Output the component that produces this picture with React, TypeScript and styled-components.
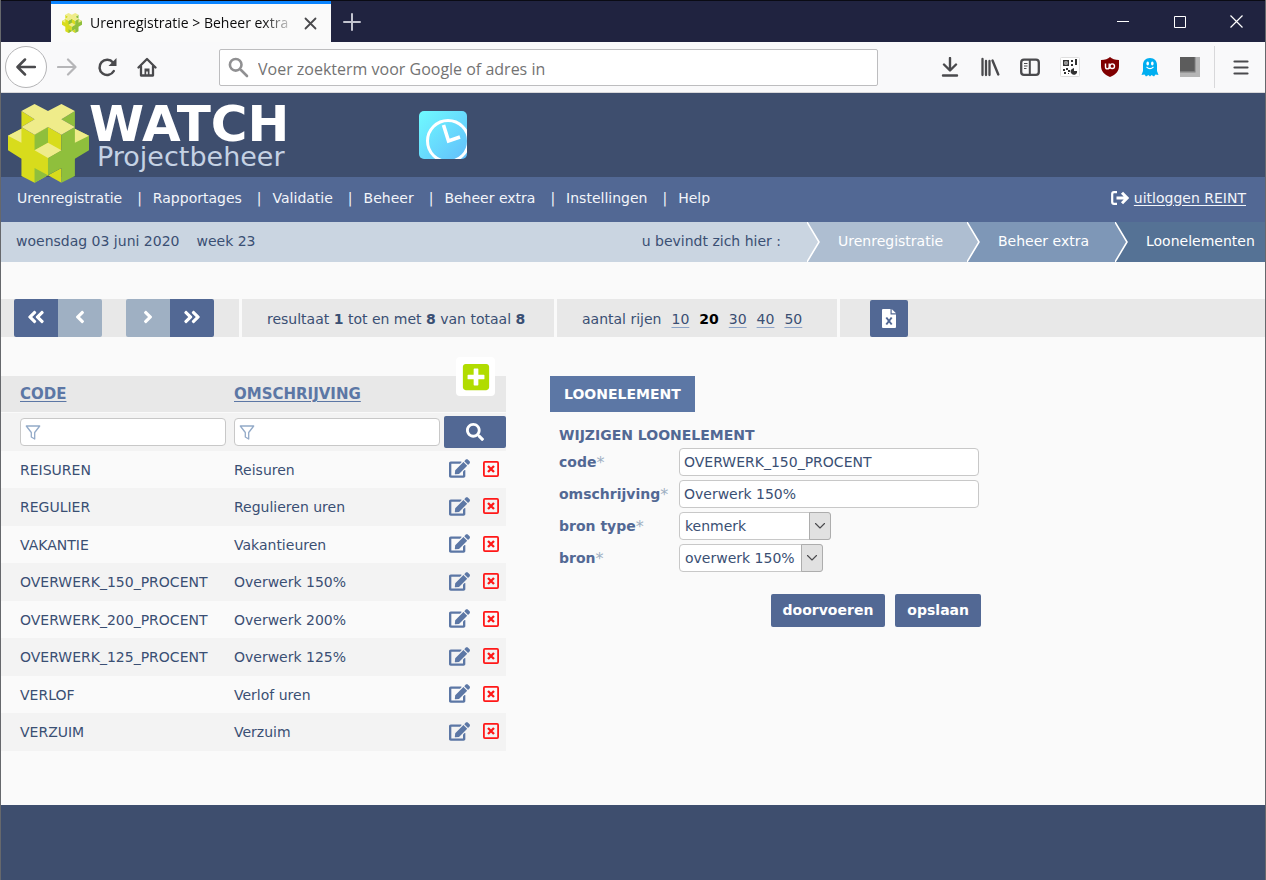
import React, { useState } from "react";
import styled, { createGlobalStyle } from "styled-components";
import {
  FaAngleDoubleLeft,
  FaAngleDoubleRight,
  FaAngleLeft,
  FaAngleRight,
  FaEdit,
  FaPlusSquare,
  FaSearch,
} from "react-icons/fa";

const color = {
  navy: "#3e4e6e",
  blue: "#526894",
  link: "#5c77a5",
  text: "#3a4f73",
  muted: "#9fb0c3",
  band: "#e8e8e8",
  page: "#fafafa",
  stripe: "#f3f3f3",
};

const uiFont = `"Open Sans", "Noto Sans", sans-serif`;

const GlobalStyle = createGlobalStyle`
  *, *::before, *::after { box-sizing: border-box; }
  body { margin: 0; background: ${color.page}; }
  body, input, select, button {
    font-family: "DejaVu Sans", Verdana, sans-serif;
    font-size: 14px;
    color: ${color.text};
  }
  button { border: 0; padding: 0; background: none; }
  svg { display: block; flex: none; }
`;

const Window = styled.div`
  min-height: 100vh;
  display: flex;
  flex-direction: column;
  border: solid #66686c;
  border-width: 0 1px;
`;

/* Browser chrome */

const TitleBar = styled.div`
  display: flex;
  align-items: stretch;
  height: 42px;
  padding-left: 50px;
  background: #202340;
  border-top: 1px solid #0a0b14;
`;

const Tab = styled.div`
  display: flex;
  align-items: center;
  gap: 8px;
  width: 280px;
  padding: 0 14px 0 11px;
  background: ${color.page};
  border-top: 3px solid #0a84ff;
`;

const TabTitle = styled.span`
  flex: 1;
  overflow: hidden;
  white-space: nowrap;
  font-family: ${uiFont};
  font-size: 14px;
  line-height: 20px;
  color: #0c0c0d;
  mask-image: linear-gradient(to right, #000 84%, transparent);
`;

const WindowButtons = styled.div`
  display: flex;
  margin-left: auto;
`;

const ChromeButton = styled.button<{ $w: number }>`
  display: flex;
  align-items: center;
  justify-content: center;
  width: ${(p) => p.$w}px;
`;

const ToolBar = styled.div`
  display: flex;
  align-items: center;
  height: 51px;
  padding: 0 4px;
  background: #f9f9fa;
  border-bottom: 1px solid #d8d8da;
`;

const BackButton = styled.button`
  display: flex;
  align-items: center;
  justify-content: center;
  width: 42px;
  height: 42px;
  border: 1px solid #b4b4b6;
  border-radius: 50%;
  background: #fff;
`;

const AddressBar = styled.label`
  display: flex;
  align-items: center;
  flex: 1;
  gap: 9px;
  max-width: 659px;
  height: 37px;
  margin-left: 52px;
  padding: 0 8px;
  background: #fff;
  border: 1px solid #bdbdbf;
  border-radius: 2px;
`;

const AddressInput = styled.input`
  flex: 1;
  min-width: 0;
  border: 0;
  padding: 3px 0 0;
  background: none;
  font-family: ${uiFont};
  font-size: 16px;
  line-height: 24px;
  &::placeholder { color: #737373; opacity: 1; }
`;

const Extensions = styled.div`
  display: flex;
  height: 42px;
  margin-left: auto;
`;

const Divider = styled.span`
  width: 1px;
  margin: 0 6px 0 4px;
  background: #d8d8da;
`;

/* Application header */

const Header = styled.header`
  position: relative;
  z-index: 1;
  display: flex;
  align-items: flex-start;
  height: 84px;
  padding: 11px 7px 0;
  background: ${color.navy};
`;

const Brand = styled.div`
  display: flex;
  width: 410px;
`;

const BrandName = styled.div`
  font-size: 50px;
  line-height: 40px;
  font-weight: bold;
  color: #fff;
`;

const BrandSub = styled.div`
  padding-left: 8px;
  font-size: 27px;
  line-height: 26px;
  color: #c5d2e4;
`;

const ClockWrap = styled.div`
  padding-top: 6px;
`;

const MenuBar = styled.nav`
  display: flex;
  align-items: center;
  justify-content: space-between;
  height: 45px;
  padding: 0 19px 4px 16px;
  background: ${color.blue};
  color: #f2f5fa;
`;

const Menu = styled.ul`
  display: flex;
  margin: 0;
  padding: 0;
  list-style: none;
`;

const MenuItem = styled.li`
  & + &::before {
    content: "|";
    margin: 0 11px 0 15px;
  }
`;

const MenuLink = styled.a`
  color: #f2f5fa;
  text-decoration: none;
`;

const Logout = styled.a`
  display: flex;
  align-items: center;
  gap: 5px;
  color: #f2f5fa;
  text-underline-offset: 2px;
`;

const CrumbBar = styled.div`
  display: flex;
  align-items: stretch;
  height: 40px;
  line-height: 38px;
  padding-left: 15px;
  background: #cad5e1;
  white-space: nowrap;
`;

const Today = styled.div`
  display: flex;
  flex: 1;
  gap: 17px;
`;

const CrumbLead = styled.span`
  padding-right: 26px;
`;

const Crumb = styled.a<{ $bg: string; $w: number }>`
  display: flex;
  gap: 18px;
  width: ${(p) => p.$w}px;
  background: ${(p) => p.$bg};
  color: #fff;
  text-decoration: none;
`;

/* Pager */

const Pager = styled.div`
  display: flex;
  height: 38px;
  margin-top: 37px;
  background: ${color.band};
  line-height: 38px;
`;

const PagerPart = styled.div<{ $w: number }>`
  display: flex;
  align-items: center;
  gap: 10px;
  width: ${(p) => p.$w}px;
  padding-left: 25px;
  padding-top: 2px;
  border-right: 3px solid ${color.page};
  white-space: nowrap;
`;

const PagerButtons = styled.div`
  display: flex;
  gap: 24px;
  width: 241px;
  padding-left: 13px;
  border-right: 3px solid ${color.page};
`;

const ButtonPair = styled.div`
  display: flex;
  border-radius: 2px;
  overflow: hidden;
`;

const PageButton = styled.button`
  display: flex;
  align-items: center;
  justify-content: center;
  width: 44px;
  padding-bottom: 2px;
  background: ${color.blue};
  color: #fff;
  &:disabled { background: ${color.muted}; }
`;

const RowCount = styled.a`
  color: ${color.text};
  text-decoration-color: #8ba3c7;
  text-underline-offset: 3px;
`;

const CurrentCount = styled.b`
  color: #000;
`;

const ExportButton = styled.button`
  display: flex;
  align-items: center;
  justify-content: center;
  width: 38px;
  margin: 1px 0 0 30px;
  border-radius: 2px;
  background: ${color.blue};
`;

/* Content */

const Content = styled.main`
  display: flex;
  align-items: flex-start;
  gap: 44px;
  padding: 39px 0 54px;
`;

const ListPanel = styled.section`
  position: relative;
  flex: none;
  width: 505px;
`;

const AddButton = styled.button`
  position: absolute;
  top: -19px;
  right: 11px;
  display: flex;
  align-items: center;
  justify-content: center;
  width: 39px;
  height: 39px;
  border-radius: 4px;
  background: #fff;
  color: #b1dc00;
`;

const Table = styled.table`
  width: 100%;
  table-layout: fixed;
  border-collapse: separate;
  border-spacing: 0;
  th, td { padding: 0; text-align: left; }
  th:first-child, td:first-child { padding-left: 19px; }
`;

const HeadRow = styled.tr`
  height: 37px;
  font-size: 15px;
  th {
    background: ${color.band};
    border-bottom: 1px solid ${color.page};
  }
`;

const FilterRow = styled.tr`
  height: 38px;
  background: ${color.stripe};
`;

const DataRow = styled.tr`
  height: 37px;
  &:nth-child(even) {
    height: 38px;
    background: ${color.stripe};
  }
`;

const SortLink = styled.a`
  color: ${color.link};
  text-transform: uppercase;
  text-underline-offset: 2px;
`;

const FilterBox = styled.label`
  display: flex;
  align-items: center;
  width: 206px;
  height: 28px;
  padding-left: 4px;
  background: #fff;
  border: 1px solid #c8c8c8;
  border-radius: 4px;
`;

const FilterInput = styled.input`
  flex: 1;
  min-width: 0;
  border: 0;
  background: none;
`;

const SearchButton = styled.button`
  display: flex;
  align-items: center;
  justify-content: center;
  width: 62px;
  height: 32px;
  border-radius: 2px;
  background: ${color.blue};
  color: #fff;
`;

const Actions = styled.div`
  display: flex;
  align-items: center;
  gap: 13px;
  padding: 0 0 2px 5px;
`;

const IconButton = styled.button`
  color: ${color.link};
`;

const FormPanel = styled.section`
  width: 431px;
`;

const FormTab = styled.button`
  height: 36px;
  padding: 0 14px;
  background: ${color.link};
  color: #fff;
  font-weight: bold;
`;

const Form = styled.form`
  display: grid;
  grid-template-columns: 120px 1fr;
  row-gap: 4px;
  padding: 14px 2px 0 9px;
`;

const FormTitle = styled.h2`
  grid-column: 1 / -1;
  margin: 0;
  font-size: 14px;
  line-height: 18px;
  color: ${color.blue};
`;

const FieldLabel = styled.label`
  display: flex;
  align-items: center;
  height: 28px;
  font-weight: bold;
  color: ${color.blue};
`;

const Required = styled.span`
  font-size: 16px;
  font-weight: normal;
  color: ${color.muted};
`;

const Field = styled.input`
  width: 100%;
  height: 28px;
  padding: 0 4px;
  background: #fff;
  border: 1px solid #c8c8c8;
  border-radius: 4px;
`;

const SelectBox = styled.div<{ $w: number }>`
  position: relative;
  width: ${(p) => p.$w}px;
  height: 28px;
`;

const Select = styled.select`
  appearance: none;
  width: 100%;
  height: 28px;
  padding: 0 22px 0 5px;
  background: #fff;
  border: 1px solid #c8c8c8;
  border-radius: 4px;
`;

const SelectArrow = styled.span`
  position: absolute;
  top: 0;
  right: 0;
  display: flex;
  align-items: center;
  justify-content: center;
  width: 22px;
  height: 28px;
  background: #e1e1e1;
  border: 1px solid #adadad;
  border-radius: 0 3px 3px 0;
  pointer-events: none;
`;

const FormButtons = styled.div`
  display: flex;
  justify-content: flex-end;
  gap: 10px;
  margin-top: 22px;
`;

const ActionButton = styled.button`
  height: 33px;
  padding: 0 12px 2px;
  border-radius: 2px;
  background: ${color.blue};
  color: #fff;
  font-weight: bold;
`;

const Footer = styled.footer`
  flex: 1;
  min-height: 75px;
  background: ${color.navy};
`;

/* Drawings */

const CubeLogo = ({ w, h }: { w: number; h: number }) => (
  <svg width={w} height={h} viewBox="24 36 241 237" preserveAspectRatio="none" aria-hidden="true">
    <path fill="#d8dc1c" d="M64 57 103 82 64 105 103 128 143 105 183 128V175L143 198V250L103 272 64 252V200L24 175V131L64 110ZM183 228 143 250 183 272Z" />
    <path fill="#8fbf3c" d="M223 57 183 82 223 105 183 128V175L143 198V250L183 228V272L223 252V200L265 175V131L223 110ZM103 128 143 105V152L103 175ZM103 228 143 250 103 272Z" />
    <path fill="#efec8a" d="M103 36 143 57 183 36 223 57 183 82 223 105 183 128 143 105 103 128 64 105 103 82 64 57ZM24 131 64 110V152ZM265 131 223 110V152ZM143 152 183 175 143 198 103 175Z" />
  </svg>
);

const ClockLogo = () => (
  <svg width="50" height="50" viewBox="0 0 50 50" aria-hidden="true">
    <defs>
      <linearGradient id="clock" x1="0" y1="0" x2="1" y2="1">
        <stop offset="0" stopColor="#6ffcff" />
        <stop offset="1" stopColor="#62bdfb" />
      </linearGradient>
      <clipPath id="clockBox"><rect x="1" y="1" width="48" height="48" rx="5" /></clipPath>
    </defs>
    <g clipPath="url(#clockBox)">
      <rect width="50" height="50" fill="url(#clock)" />
      <circle cx="30" cy="31" r="20.5" fill="none" stroke="#fff" strokeWidth="3" />
      <path d="M25.5 15 30.5 31 42 27" fill="none" stroke="#fff" strokeWidth="3.6" />
    </g>
  </svg>
);

type LineProps = { w: number; h?: number; d: string; c?: string; s?: number; cap?: "round" | "butt" };
const Line = ({ w, h = w, d, c = "#4a4a4d", s = 2.4, cap = "round" }: LineProps) => (
  <svg width={w} height={h} viewBox={`0 0 ${w} ${h}`} fill="none" stroke={c} strokeWidth={s} strokeLinecap={cap} strokeLinejoin={cap === "round" ? "round" : "miter"} aria-hidden="true">
    <path d={d} />
  </svg>
);

const HomeIcon = () => (
  <svg width="20" height="20" viewBox="0 0 20 20" aria-hidden="true">
    <path d="M1.500 10.500 10 2 18.500 10.500M4 9.500V18.500H16V9.500" fill="none" stroke="#4a4a4d" strokeWidth="2.300" strokeLinecap="round" strokeLinejoin="round" />
    <path d="M7.500 18V11.500H12.500V18H10.800V14.500H9.200V18Z" fill="#4a4a4d" />
  </svg>
);

const ReloadIcon = () => (
  <svg width="20" height="20" viewBox="0 0 20 20" aria-hidden="true">
    <path d="M16.800 14A7.600 7.600 0 1 1 16 5.500" fill="none" stroke="#4a4a4d" strokeWidth="2.500" strokeLinecap="round" />
    <path d="M19.500 1V9H11.500Z" fill="#4a4a4d" />
  </svg>
);

const SidebarIcon = () => (
  <svg width="20" height="20" viewBox="0 0 20 20" fill="none" stroke="#4a4a4d" aria-hidden="true">
    <rect x="1.200" y="2.700" width="17.600" height="15.100" rx="2.800" strokeWidth="2.300" />
    <path d="M9.800 3V18" strokeWidth="2" />
    <path d="M4 6.500H7.500M4 9H7.500M4 11.500H6.500" strokeWidth="1.100" />
  </svg>
);

const QrIcon = () => (
  <svg width="20" height="20" viewBox="0 0 20 20" aria-hidden="true">
    <rect x=".5" y=".5" width="19" height="19" rx="1" fill="#fff" stroke="#dedede" />
    <path d="M3 3H9V9H3ZM11 3H13V5H11ZM15 2H17V8H15ZM11 7H13V9H11ZM3 12H5V14H3ZM6 11H8V13H6ZM8 13H10V15H8ZM4 15H6V17H4ZM8 16H9V17H8ZM14 11V14H17A3.200 3.200 0 1 1 12 12Z" fill="#333" />
    <path d="M4.500 4.500H7.500V7.500H4.500Z" fill="#fff" />
    <path d="M5.300 5.300H6.700V6.700H5.300Z" fill="#333" />
  </svg>
);

const ShieldIcon = () => (
  <svg width="20" height="20" viewBox="0 0 20 20" aria-hidden="true">
    <path d="M10 0C12 2 15 3 19 3V9C19 14 16 17.500 10 20 4 17.500 1 14 1 9V3C5 3 8 2 10 0Z" fill="#800000" />
    <path d="M5.500 6.500V10A1.800 1.800 0 0 0 9.200 10V6.500M9.200 10V12" fill="none" stroke="#fff" strokeWidth="1.400" />
    <circle cx="12.200" cy="9.200" r="2.300" fill="none" stroke="#fff" strokeWidth="1.400" />
  </svg>
);

const GhostIcon = () => (
  <svg width="20" height="20" viewBox="0 0 20 20" aria-hidden="true">
    <path d="M10 1C14.500 1 17 4 17 8V14L18.500 18 15.500 17.500 14 19.500 11.500 18 10 19.500 8.500 18 6 19.500 4.500 17.500 1.500 18 3 14V8C3 4 5.500 1 10 1Z" fill="#00aef0" />
    <ellipse cx="7.700" cy="6.500" rx="1.300" ry="1.900" fill="#fff" />
    <ellipse cx="12.300" cy="6.500" rx="1.300" ry="1.900" fill="#fff" />
    <path d="M6.500 9.800Q10 13.500 13.500 9.800" fill="none" stroke="#fff" strokeWidth="1.200" />
  </svg>
);

const SquareIcon = () => (
  <svg width="20" height="20" viewBox="0 0 20 20" aria-hidden="true">
    <path fill="#b5b5b5" d="M0 0H20V20H0Z" />
    <path fill="#7d7d7d" d="M0 0H15.500V15.500H0Z" />
    <path fill="#5c5c5c" d="M0 0H14.500V14H0Z" />
  </svg>
);

const LibraryIcon = () => (
  <svg width="20" height="20" viewBox="0 0 20 20" fill="none" stroke="#4a4a4d" aria-hidden="true">
    <path d="M2.500 2V18M6 4V18M9.500 4V18" strokeWidth="2.300" strokeLinecap="round" />
    <path d="M12.500 3.500 18.300 17.500" strokeWidth="2.400" strokeLinecap="round" />
  </svg>
);

const LogoutIcon = () => (
  <svg width="18" height="14" viewBox="0 0 18 14" aria-hidden="true">
    <path d="M6 1.200H3Q1.200 1.200 1.200 3V11Q1.200 12.800 3 12.800H6" fill="none" stroke="#fff" strokeWidth="2.200" />
    <path d="M5.500 7H16M11 1.800 16.200 7 11 12.200" fill="none" stroke="#fff" strokeWidth="3" />
  </svg>
);

const FunnelIcon = () => (
  <svg width="16" height="15" viewBox="0 0 16 15" fill="none" stroke="#93aac8" strokeWidth="1.300" strokeLinejoin="round" aria-hidden="true">
    <path d="M1.300 1H14.700L9.700 7.500V14L6.300 12V7.500Z" />
  </svg>
);

const ExcelIcon = () => (
  <svg width="14" height="19" viewBox="0 0 14 19" aria-hidden="true">
    <path d="M0 1Q0 0 1 0H8.500V5.500H14V18Q14 19 13 19H1Q0 19 0 18Z" fill="#fff" />
    <path d="M9.700 0 14 4.300H9.700Z" fill="#fff" />
    <path d="M4.300 8.500 9.700 15.500M9.700 8.500 4.300 15.500" stroke={color.blue} strokeWidth="2" />
  </svg>
);

const DeleteIcon = () => (
  <svg width="16" height="16" viewBox="0 0 16 16" fill="none" stroke="#ff1818" aria-hidden="true">
    <rect x=".9" y=".9" width="14.200" height="14.200" rx="1" strokeWidth="1.800" />
    <path d="M5 5 11 11M11 5 5 11" strokeWidth="2.300" />
  </svg>
);

const Chevron = ({ from }: { from: string }) => (
  <svg width="13" height="40" viewBox="0 0 13 40" aria-hidden="true">
    <path d="M0 0 12 20 0 40Z" fill={from} />
    <path d="M0 0 12 20 0 40" fill="none" stroke="#fff" strokeWidth="1.600" />
  </svg>
);

const menu = ["Urenregistratie", "Rapportages", "Validatie", "Beheer", "Beheer extra", "Instellingen", "Help"];

const crumbs = [
  { label: "Urenregistratie", bg: "#aebed1", from: "#cad5e1", w: 160 },
  { label: "Beheer extra", bg: "#7e97b7", from: "#aebed1", w: 148 },
  { label: "Loonelementen", bg: "#557295", from: "#7e97b7", w: 150 },
];

const rows = [
  ["REISUREN", "Reisuren"],
  ["REGULIER", "Regulieren uren"],
  ["VAKANTIE", "Vakantieuren"],
  ["OVERWERK_150_PROCENT", "Overwerk 150%"],
  ["OVERWERK_200_PROCENT", "Overwerk 200%"],
  ["OVERWERK_125_PROCENT", "Overwerk 125%"],
  ["VERLOF", "Verlof uren"],
  ["VERZUIM", "Verzuim"],
];

const BrowserChrome = () => (
  <>
    <TitleBar>
      <Tab>
        <CubeLogo w={20} h={20} />
        <TabTitle>Urenregistratie &gt; Beheer extra</TabTitle>
        <button aria-label="Tabblad sluiten"><Line w={13} d="M1.500 1.500 11.500 11.500M11.500 1.500 1.500 11.500" s={1.8} /></button>
      </Tab>
      <ChromeButton $w={42} aria-label="Nieuw tabblad"><Line w={18} d="M9 1V17M1 9H17" c="#c3c4cf" s={2} /></ChromeButton>
      <WindowButtons>
        <ChromeButton $w={57} aria-label="Minimaliseren"><Line w={12} d="M0 5.500H12" c="#fff" s={1} cap="butt" /></ChromeButton>
        <ChromeButton $w={57} aria-label="Maximaliseren"><Line w={12} d="M.5 .5H11.500V11.500H.5Z" c="#fff" s={1} cap="butt" /></ChromeButton>
        <ChromeButton $w={57} aria-label="Sluiten"><Line w={13} d="M.5 .5 12.500 12.500M12.500 .5 .5 12.500" c="#fff" s={1.2} cap="butt" /></ChromeButton>
      </WindowButtons>
    </TitleBar>
    <ToolBar>
      <BackButton aria-label="Terug"><Line w={20} d="M19 10H2M9 2.500 1.500 10 9 17.500" s={2.5} /></BackButton>
      <ChromeButton $w={40} aria-label="Vooruit"><Line w={20} d="M1 10H18M11 2.500 18.500 10 11 17.500" s={2.2} c="#b6b6b8" /></ChromeButton>
      <ChromeButton $w={40} aria-label="Vernieuwen"><ReloadIcon /></ChromeButton>
      <ChromeButton $w={40} aria-label="Startpagina"><HomeIcon /></ChromeButton>
      <AddressBar>
        <Line w={21} d="M13.500 7.800A5.800 5.800 0 1 1 1.900 7.800A5.800 5.800 0 1 1 13.500 7.800M12 12 19 19" c="#909092" s={2.6} />
        <AddressInput aria-label="Adres" placeholder="Voer zoekterm voor Google of adres in" />
      </AddressBar>
      <Extensions>
        <ChromeButton $w={40} aria-label="Downloads"><Line w={20} d="M10 1V13M4 7.500 10 13.500 16 7.500M3 18.500H17" /></ChromeButton>
        <ChromeButton $w={40} aria-label="Bibliotheek"><LibraryIcon /></ChromeButton>
        <ChromeButton $w={40} aria-label="Zijbalk"><SidebarIcon /></ChromeButton>
        <ChromeButton $w={40} aria-label="QR-code"><QrIcon /></ChromeButton>
        <ChromeButton $w={40} aria-label="Blokkeerder"><ShieldIcon /></ChromeButton>
        <ChromeButton $w={40} aria-label="Tracking"><GhostIcon /></ChromeButton>
        <ChromeButton $w={40} aria-label="Extensie"><SquareIcon /></ChromeButton>
        <Divider />
        <ChromeButton $w={40} aria-label="Menu"><Line w={16} d="M1.500 2.500H14.500M1.500 8.500H14.500M1.500 14.500H14.500" s={2.2} /></ChromeButton>
      </Extensions>
    </ToolBar>
  </>
);

export default function App() {
  const [code, setCode] = useState("OVERWERK_150_PROCENT");
  const [description, setDescription] = useState("Overwerk 150%");

  return (
    <Window>
      <GlobalStyle />
      <BrowserChrome />

      <Header>
        <Brand>
          <CubeLogo w={81} h={79} />
          <div>
            <BrandName>WATCH</BrandName>
            <BrandSub>Projectbeheer</BrandSub>
          </div>
        </Brand>
        <ClockWrap><ClockLogo /></ClockWrap>
      </Header>

      <MenuBar>
        <Menu>
          {menu.map((m) => (
            <MenuItem key={m}><MenuLink href="#">{m}</MenuLink></MenuItem>
          ))}
        </Menu>
        <Logout href="#"><LogoutIcon />uitloggen REINT</Logout>
      </MenuBar>

      <CrumbBar>
        <Today><span>woensdag 03 juni 2020</span><span>week 23</span></Today>
        <CrumbLead>u bevindt zich hier :</CrumbLead>
        {crumbs.map((c) => (
          <Crumb key={c.label} href="#" $bg={c.bg} $w={c.w}><Chevron from={c.from} />{c.label}</Crumb>
        ))}
      </CrumbBar>

      <Pager>
        <PagerButtons>
          <ButtonPair>
            <PageButton aria-label="Eerste"><FaAngleDoubleLeft size={20} /></PageButton>
            <PageButton aria-label="Vorige" disabled><FaAngleLeft size={20} /></PageButton>
          </ButtonPair>
          <ButtonPair>
            <PageButton aria-label="Volgende" disabled><FaAngleRight size={20} /></PageButton>
            <PageButton aria-label="Laatste"><FaAngleDoubleRight size={20} /></PageButton>
          </ButtonPair>
        </PagerButtons>
        <PagerPart $w={315}>
          <span>resultaat <b>1</b> tot en met <b>8</b> van totaal <b>8</b></span>
        </PagerPart>
        <PagerPart $w={283}>
          <span>aantal rijen</span>
          <RowCount href="#">10</RowCount>
          <CurrentCount>20</CurrentCount>
          <RowCount href="#">30</RowCount>
          <RowCount href="#">40</RowCount>
          <RowCount href="#">50</RowCount>
        </PagerPart>
        <ExportButton aria-label="Exporteren naar Excel"><ExcelIcon /></ExportButton>
      </Pager>

      <Content>
        <ListPanel>
          <Table>
            <colgroup>
              <col width={233} />
              <col width={210} />
              <col width={62} />
            </colgroup>
            <thead>
              <HeadRow>
                <th><SortLink href="#">Code</SortLink></th>
                <th><SortLink href="#">Omschrijving</SortLink></th>
                <th />
              </HeadRow>
              <FilterRow>
                <td><FilterBox><FunnelIcon /><FilterInput aria-label="Filter op code" /></FilterBox></td>
                <td><FilterBox><FunnelIcon /><FilterInput aria-label="Filter op omschrijving" /></FilterBox></td>
                <td><SearchButton aria-label="Zoeken"><FaSearch size={18} /></SearchButton></td>
              </FilterRow>
            </thead>
            <tbody>
              {rows.map(([c, o]) => (
                <DataRow key={c}>
                  <td>{c}</td>
                  <td>{o}</td>
                  <td>
                    <Actions>
                      <IconButton aria-label={`${o} wijzigen`}><FaEdit size={21} /></IconButton>
                      <IconButton aria-label={`${o} verwijderen`}><DeleteIcon /></IconButton>
                    </Actions>
                  </td>
                </DataRow>
              ))}
            </tbody>
          </Table>
          <AddButton aria-label="Toevoegen"><FaPlusSquare size={30} /></AddButton>
        </ListPanel>

        <FormPanel>
          <FormTab type="button">LOONELEMENT</FormTab>
          <Form onSubmit={(e) => e.preventDefault()}>
            <FormTitle>WIJZIGEN LOONELEMENT</FormTitle>
            <FieldLabel htmlFor="code">code<Required>*</Required></FieldLabel>
            <Field id="code" value={code} onChange={(e) => setCode(e.target.value)} />
            <FieldLabel htmlFor="omschrijving">omschrijving<Required>*</Required></FieldLabel>
            <Field id="omschrijving" value={description} onChange={(e) => setDescription(e.target.value)} />
            <FieldLabel htmlFor="brontype">bron type<Required>*</Required></FieldLabel>
            <SelectBox $w={152}>
              <Select id="brontype"><option>kenmerk</option></Select>
              <SelectArrow><Line w={12} h={8} d="M1.500 1.500 6 6 10.500 1.500" s={1.1} /></SelectArrow>
            </SelectBox>
            <FieldLabel htmlFor="bron">bron<Required>*</Required></FieldLabel>
            <SelectBox $w={144}>
              <Select id="bron"><option>overwerk 150%</option></Select>
              <SelectArrow><Line w={12} h={8} d="M1.500 1.500 6 6 10.500 1.500" s={1.1} /></SelectArrow>
            </SelectBox>
          </Form>
          <FormButtons>
            <ActionButton type="button">doorvoeren</ActionButton>
            <ActionButton type="button">opslaan</ActionButton>
          </FormButtons>
        </FormPanel>
      </Content>

      <Footer />
    </Window>
  );
}
